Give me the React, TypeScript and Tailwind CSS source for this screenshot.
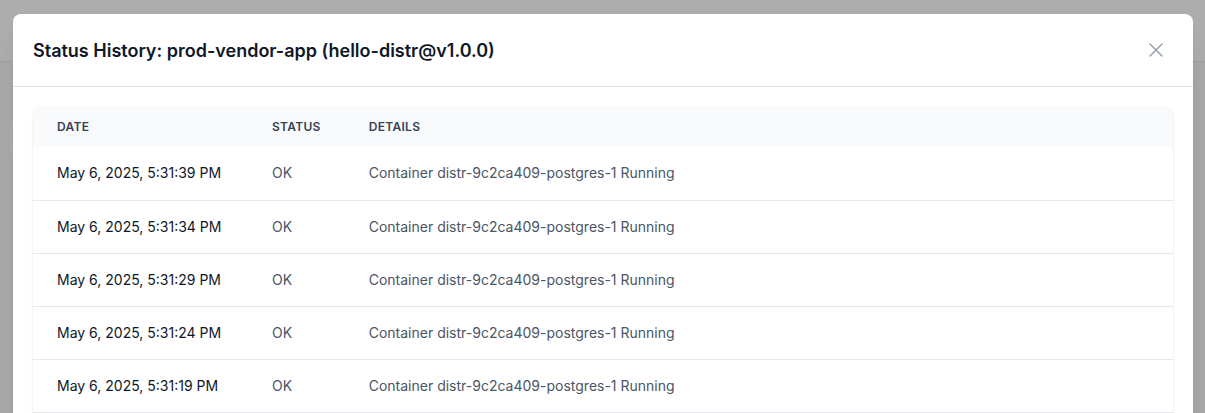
import { X } from 'lucide-react';

const rows = [
    { date: 'May 6, 2025, 5:31:39 PM', status: 'OK', details: 'Container distr-9c2ca409-postgres-1 Running' },
    { date: 'May 6, 2025, 5:31:34 PM', status: 'OK', details: 'Container distr-9c2ca409-postgres-1 Running' },
    { date: 'May 6, 2025, 5:31:29 PM', status: 'OK', details: 'Container distr-9c2ca409-postgres-1 Running' },
    { date: 'May 6, 2025, 5:31:24 PM', status: 'OK', details: 'Container distr-9c2ca409-postgres-1 Running' },
    { date: 'May 6, 2025, 5:31:19 PM', status: 'OK', details: 'Container distr-9c2ca409-postgres-1 Running' },
];

export default function App() {
    return (
        <div className="relative h-[413px] w-full overflow-hidden bg-[#a9a9a9] font-['Inter',sans-serif]">
            {/* dimmed page behind */}
            <div className="h-[62px] border-b border-[#9f9f9f] bg-[#adadad]" />
            <div className="ml-[9px] mt-[57px] h-[36px] w-[40px] rounded-md bg-[#adadad]" />

            {/* Modal */}
            <div className="absolute left-[13px] top-[14px] h-[460px] w-[1180px] rounded-lg bg-white shadow-xl">
                <div className="flex h-[73px] items-center justify-between border-b border-[#e4e3ea] px-5">
                    <h2 className="text-[18px] font-semibold text-gray-900">
                        Status History: prod-vendor-app (hello-distr@v1.0.0)
                    </h2>
                    <button type="button" className="mr-[5px] text-gray-400">
                        <X className="h-6 w-6" strokeWidth={1.5} />
                    </button>
                </div>

                <div className="px-5 pt-5">
                    <div className="h-[360px] overflow-hidden rounded-lg bg-white shadow-sm">
                        <table className="w-full text-left">
                            <thead className="bg-gray-50">
                                <tr className="h-10">
                                    <th className="w-[215px] px-6 text-xs font-semibold uppercase tracking-wide text-gray-700">
                                        Date
                                    </th>
                                    <th className="w-[95px] px-6 text-xs font-semibold uppercase tracking-wide text-gray-700">
                                        Status
                                    </th>
                                    <th className="px-6 text-xs font-semibold uppercase tracking-wide text-gray-700">
                                        Details
                                    </th>
                                </tr>
                            </thead>
                            <tbody className="divide-y divide-gray-200 border-b border-gray-200">
                                {rows.map((row, i) => (
                                    <tr key={i} className="h-[53px]">
                                        <td className="whitespace-nowrap px-6 text-sm text-gray-900">{row.date}</td>
                                        <td className="px-6 text-sm text-gray-600">{row.status}</td>
                                        <td className="px-6 text-sm text-gray-600">{row.details}</td>
                                    </tr>
                                ))}
                            </tbody>
                        </table>
                    </div>
                </div>
            </div>
        </div>
    );
}
